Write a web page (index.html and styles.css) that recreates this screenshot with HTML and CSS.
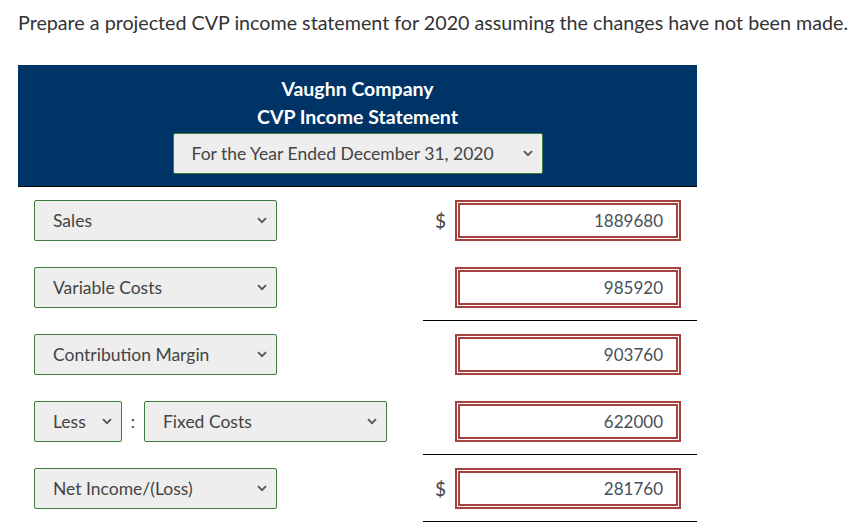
FILE: index.html
```html
<!DOCTYPE html>
<html>
<head>
<meta charset="utf-8">
<link rel="stylesheet" href="styles.css">
</head>
<body>
<div class="page">
  <p class="prompt">Prepare a projected CVP income statement for 2020 assuming the changes have not been made.</p>
  <div class="sheet">
    <div class="head">
      <div class="h-title">Vaughn Company</div>
      <div class="h-title">CVP Income Statement</div>
      <div class="sel sel-period">
        <span>For the Year Ended December 31, 2020</span>
        <svg class="chev" width="10" height="7" viewBox="0 0 10 7"><path d="M1 1.2 L5 5.2 L9 1.2" fill="none" stroke="#555" stroke-width="1.8"/></svg>
      </div>
    </div>

    <div class="row">
      <div class="label"><div class="sel sel-w"><span>Sales</span><svg class="chev" width="10" height="7" viewBox="0 0 10 7"><path d="M1 1.2 L5 5.2 L9 1.2" fill="none" stroke="#555" stroke-width="1.8"/></svg></div></div>
      <div class="val"><span class="cur">$</span><div class="box">1889680</div></div>
    </div>

    <div class="row">
      <div class="label"><div class="sel sel-w"><span>Variable Costs</span><svg class="chev" width="10" height="7" viewBox="0 0 10 7"><path d="M1 1.2 L5 5.2 L9 1.2" fill="none" stroke="#555" stroke-width="1.8"/></svg></div></div>
      <div class="val ruled"><span class="cur"></span><div class="box">985920</div></div>
    </div>

    <div class="row">
      <div class="label"><div class="sel sel-w"><span>Contribution Margin</span><svg class="chev" width="10" height="7" viewBox="0 0 10 7"><path d="M1 1.2 L5 5.2 L9 1.2" fill="none" stroke="#555" stroke-width="1.8"/></svg></div></div>
      <div class="val"><span class="cur"></span><div class="box">903760</div></div>
    </div>

    <div class="row">
      <div class="label">
        <div class="sel sel-less"><span>Less</span><svg class="chev" width="10" height="7" viewBox="0 0 10 7"><path d="M1 1.2 L5 5.2 L9 1.2" fill="none" stroke="#555" stroke-width="1.8"/></svg></div>
        <span class="colon">:</span>
        <div class="sel sel-w"><span>Fixed Costs</span><svg class="chev" width="10" height="7" viewBox="0 0 10 7"><path d="M1 1.2 L5 5.2 L9 1.2" fill="none" stroke="#555" stroke-width="1.8"/></svg></div>
      </div>
      <div class="val ruled"><span class="cur"></span><div class="box">622000</div></div>
    </div>

    <div class="row">
      <div class="label"><div class="sel sel-w"><span>Net Income/(Loss)</span><svg class="chev" width="10" height="7" viewBox="0 0 10 7"><path d="M1 1.2 L5 5.2 L9 1.2" fill="none" stroke="#555" stroke-width="1.8"/></svg></div></div>
      <div class="val ruled"><span class="cur">$</span><div class="box">281760</div></div>
    </div>
  </div>
</div>
</body>
</html>
```

FILE: styles.css
```css
html, body {
  margin: 0;
  padding: 0;
  background: #fff;
}
body {
  font-family: Lato, "Open Sans", sans-serif;
  color: #333;
}
.page {
  padding-left: 18px;
}
.prompt {
  margin: 0;
  padding-top: 11px;
  height: 54px;
  font-size: 19.7px;
  line-height: 24px;
  color: #333;
  white-space: nowrap;
}
.sheet {
  width: 679px;
}
.head {
  background: #003366;
  border-bottom: 1px solid #000;
  display: flex;
  flex-direction: column;
  align-items: center;
  padding-top: 10px;
  box-sizing: border-box;
  height: 122px;
}
.h-title {
  color: #fff;
  font-weight: 700;
  font-size: 19.5px;
  line-height: 28px;
}
.sel {
  box-sizing: border-box;
  height: 41px;
  background: #eeeeee;
  border: 1px solid #3e7d3e;
  border-radius: 2px;
  display: flex;
  align-items: center;
  justify-content: space-between;
  padding: 0 9px 0 18px;
  font-size: 17.5px;
  color: #444;
}
.sel-period {
  width: 370px;
  margin-top: 2px;
}
.sel-w {
  width: 243px;
}
.sel-less {
  width: 88px;
}
.chev {
  flex: none;
}
.row {
  display: flex;
  height: 67px;
}
.label {
  width: 405px;
  box-sizing: border-box;
  padding: 13px 0 0 16px;
  display: flex;
  align-items: flex-start;
}
.colon {
  width: 22px;
  text-align: center;
  font-size: 17px;
  line-height: 41px;
  color: #444;
}
.val {
  width: 274px;
  box-sizing: border-box;
  padding: 13px 16px 0 12px;
  display: flex;
  align-items: flex-start;
}
.val.ruled {
  border-bottom: 1px solid #000;
}
.cur {
  width: 20px;
  font-size: 19px;
  line-height: 41px;
  color: #444;
}
.box {
  box-sizing: border-box;
  width: 226px;
  height: 41px;
  border: 5px double #a8403d;
  text-align: right;
  padding-right: 13px;
  font-size: 17px;
  line-height: 31px;
  color: #47505a;
}
```
